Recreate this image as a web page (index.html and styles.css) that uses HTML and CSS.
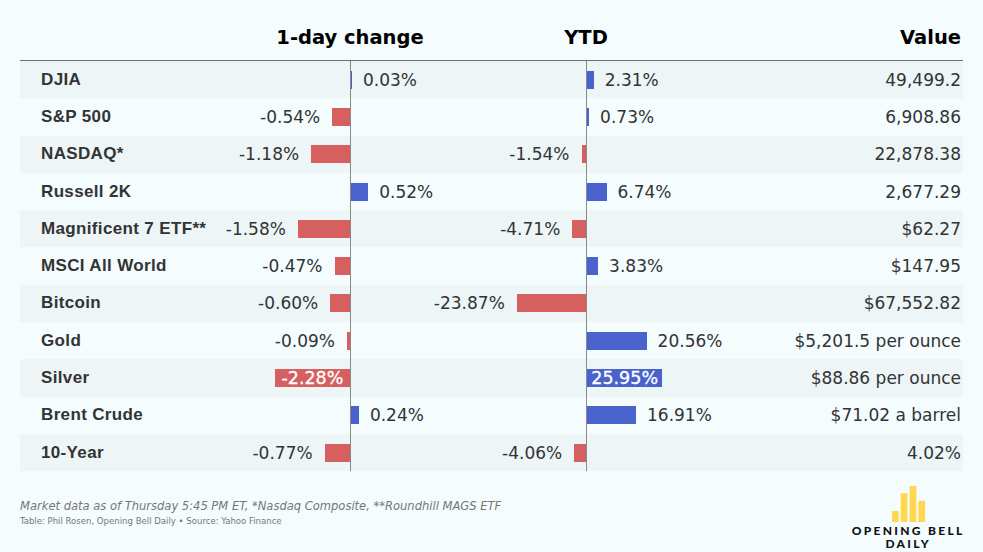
FILE: index.html
```html
<!DOCTYPE html>
<html lang="en">
<head>
<meta charset="utf-8">
<title>Markets</title>
<link rel="stylesheet" href="styles.css">
</head>
<body>
<div class="page">
  <div class="grid head">
    <div></div>
    <div></div>
    <div class="hc"><span>1-day change</span></div>
    <div></div>
    <div class="hc"><span>YTD</span></div>
    <div class="hval">Value</div>
  </div>
  <div class="table">
    <div class="grid row odd">
      <div class="name">DJIA</div>
      <div class="neg"></div>
      <div class="pos"><span class="bar blue" style="width:1px"></span><span class="lbl">0.03%</span></div>
      <div class="neg"></div>
      <div class="pos"><span class="bar blue" style="width:6.7px"></span><span class="lbl">2.31%</span></div>
      <div class="val">49,499.2</div>
    </div>
    <div class="grid row">
      <div class="name">S&amp;P 500</div>
      <div class="neg"><span class="lbl">-0.54%</span><span class="bar red" style="width:17.8px"></span></div>
      <div class="pos"></div>
      <div class="neg"></div>
      <div class="pos"><span class="bar blue" style="width:2.1px"></span><span class="lbl">0.73%</span></div>
      <div class="val">6,908.86</div>
    </div>
    <div class="grid row odd">
      <div class="name">NASDAQ*</div>
      <div class="neg"><span class="lbl">-1.18%</span><span class="bar red" style="width:38.9px"></span></div>
      <div class="pos"></div>
      <div class="neg"><span class="lbl">-1.54%</span><span class="bar red" style="width:4.5px"></span></div>
      <div class="pos"></div>
      <div class="val">22,878.38</div>
    </div>
    <div class="grid row">
      <div class="name">Russell 2K</div>
      <div class="neg"></div>
      <div class="pos"><span class="bar blue" style="width:17.2px"></span><span class="lbl">0.52%</span></div>
      <div class="neg"></div>
      <div class="pos"><span class="bar blue" style="width:19.5px"></span><span class="lbl">6.74%</span></div>
      <div class="val">2,677.29</div>
    </div>
    <div class="grid row odd">
      <div class="name">Magnificent 7 ETF**</div>
      <div class="neg"><span class="lbl">-1.58%</span><span class="bar red" style="width:52.1px"></span></div>
      <div class="pos"></div>
      <div class="neg"><span class="lbl">-4.71%</span><span class="bar red" style="width:13.7px"></span></div>
      <div class="pos"></div>
      <div class="val">$62.27</div>
    </div>
    <div class="grid row">
      <div class="name">MSCI All World</div>
      <div class="neg"><span class="lbl">-0.47%</span><span class="bar red" style="width:15.5px"></span></div>
      <div class="pos"></div>
      <div class="neg"></div>
      <div class="pos"><span class="bar blue" style="width:11.1px"></span><span class="lbl">3.83%</span></div>
      <div class="val">$147.95</div>
    </div>
    <div class="grid row odd">
      <div class="name">Bitcoin</div>
      <div class="neg"><span class="lbl">-0.60%</span><span class="bar red" style="width:19.8px"></span></div>
      <div class="pos"></div>
      <div class="neg"><span class="lbl">-23.87%</span><span class="bar red" style="width:69.2px"></span></div>
      <div class="pos"></div>
      <div class="val">$67,552.82</div>
    </div>
    <div class="grid row">
      <div class="name">Gold</div>
      <div class="neg"><span class="lbl">-0.09%</span><span class="bar red" style="width:3px"></span></div>
      <div class="pos"></div>
      <div class="neg"></div>
      <div class="pos"><span class="bar blue" style="width:59.6px"></span><span class="lbl">20.56%</span></div>
      <div class="val">$5,201.5 per ounce</div>
    </div>
    <div class="grid row odd">
      <div class="name">Silver</div>
      <div class="neg"><span class="bar red inside" style="width:75.2px">-2.28%</span></div>
      <div class="pos"></div>
      <div class="neg"></div>
      <div class="pos"><span class="bar blue inside" style="width:75.3px">25.95%</span></div>
      <div class="val">$88.86 per ounce</div>
    </div>
    <div class="grid row">
      <div class="name">Brent Crude</div>
      <div class="neg"></div>
      <div class="pos"><span class="bar blue" style="width:7.9px"></span><span class="lbl">0.24%</span></div>
      <div class="neg"></div>
      <div class="pos"><span class="bar blue" style="width:49px"></span><span class="lbl">16.91%</span></div>
      <div class="val">$71.02 a barrel</div>
    </div>
    <div class="grid row odd">
      <div class="name">10-Year</div>
      <div class="neg"><span class="lbl">-0.77%</span><span class="bar red" style="width:25.4px"></span></div>
      <div class="pos"></div>
      <div class="neg"><span class="lbl">-4.06%</span><span class="bar red" style="width:11.8px"></span></div>
      <div class="pos"></div>
      <div class="val">4.02%</div>
    </div>
  </div>
</div>
<div class="footer">
  <div class="notes">
    <div class="note">Market data as of Thursday 5:45 PM ET, *Nasdaq Composite, **Roundhill MAGS ETF</div>
    <div class="credit">Table: Phil Rosen, Opening Bell Daily • Source: Yahoo Finance</div>
  </div>
  <div class="logo">
    <svg class="logo-bars" width="34" height="36" viewBox="0 0 34 36">
      <rect x="0" y="25" width="6.7" height="11" fill="#ffd84f"/>
      <rect x="8.7" y="7.3" width="6.7" height="28.7" fill="#ffd84f"/>
      <rect x="17.7" y="0" width="6.7" height="36" fill="#ffd84f"/>
      <rect x="26.4" y="14.7" width="6.7" height="21.3" fill="#ffd84f"/>
    </svg>
    <div class="logo-text">OPENING BELL</div>
    <div class="logo-text">DAILY</div>
  </div>
</div>
</body>
</html>
```

FILE: styles.css
```css
html, body {
  margin: 0;
  padding: 0;
}
body {
  background: #f4fcfe;
  width: 983px;
  height: 552px;
  overflow: hidden;
  font-family: "DejaVu Sans", Verdana, sans-serif;
  color: #333;
}
.page {
  padding: 0 20px;
}
.grid {
  display: grid;
  grid-template-columns: 195px 135px 90px 146px 174px 203px;
}
.head {
  height: 60px;
  box-sizing: border-box;
  padding-top: 26px;
  font-weight: bold;
  font-size: 19.5px;
  line-height: 23px;
  color: #000;
}
.hc {
  width: 0;
  display: flex;
  justify-content: center;
  white-space: nowrap;
}
.hval {
  text-align: right;
  padding-right: 2px;
}
.table {
  border-top: 1px solid #6e6e6e;
}
.row {
  height: 37.3px;
  align-items: stretch;
}
.row.odd {
  background: #edf5f6;
}
.name {
  display: flex;
  align-items: center;
  padding-left: 21px;
  font-family: "Liberation Sans", Arial, sans-serif;
  font-weight: bold;
  font-size: 17px;
  letter-spacing: 0.35px;
  color: #333;
  white-space: nowrap;
}
.neg, .pos {
  display: flex;
  align-items: center;
  white-space: nowrap;
  font-size: 17px;
}
.neg {
  justify-content: flex-end;
  gap: 12px;
}
.pos {
  justify-content: flex-start;
  gap: 11px;
  border-left: 1px solid #8a8a8a;
}
.bar {
  display: block;
  height: 18px;
  flex: none;
}
.red {
  background: #d65f5f;
}
.blue {
  background: #4a63cc;
}
.inside {
  color: #fff;
  text-align: center;
  line-height: 18px;
  font-size: 17.5px;
  -webkit-text-stroke: 0.3px #fff;
}
.lbl {
  color: #333;
}
.val {
  display: flex;
  align-items: center;
  justify-content: flex-end;
  padding-right: 2px;
  font-size: 17px;
  white-space: nowrap;
}
.footer {
  display: flex;
  justify-content: space-between;
  align-items: flex-start;
  padding: 0 16px 0 20px;
}
.notes {
  padding-top: 27px;
  color: #777;
  font-family: "DejaVu Sans Condensed", "DejaVu Sans", sans-serif;
}
.note {
  font-style: italic;
  font-size: 12.8px;
  line-height: 15px;
}
.credit {
  font-size: 9.5px;
  line-height: 13px;
  margin-top: 1px;
}
.logo {
  margin-top: 14.6px;
  display: flex;
  flex-direction: column;
  align-items: center;
  width: 120px;
}
.logo-bars {
  display: block;
  margin-left: 3px;
  margin-bottom: 2px;
}
.logo-text {
  font-family: Lato, "DejaVu Sans", sans-serif;
  font-weight: 900;
  font-size: 12px;
  line-height: 13.4px;
  letter-spacing: 2.3px;
  padding-left: 2.3px;
  color: #111;
}
```
